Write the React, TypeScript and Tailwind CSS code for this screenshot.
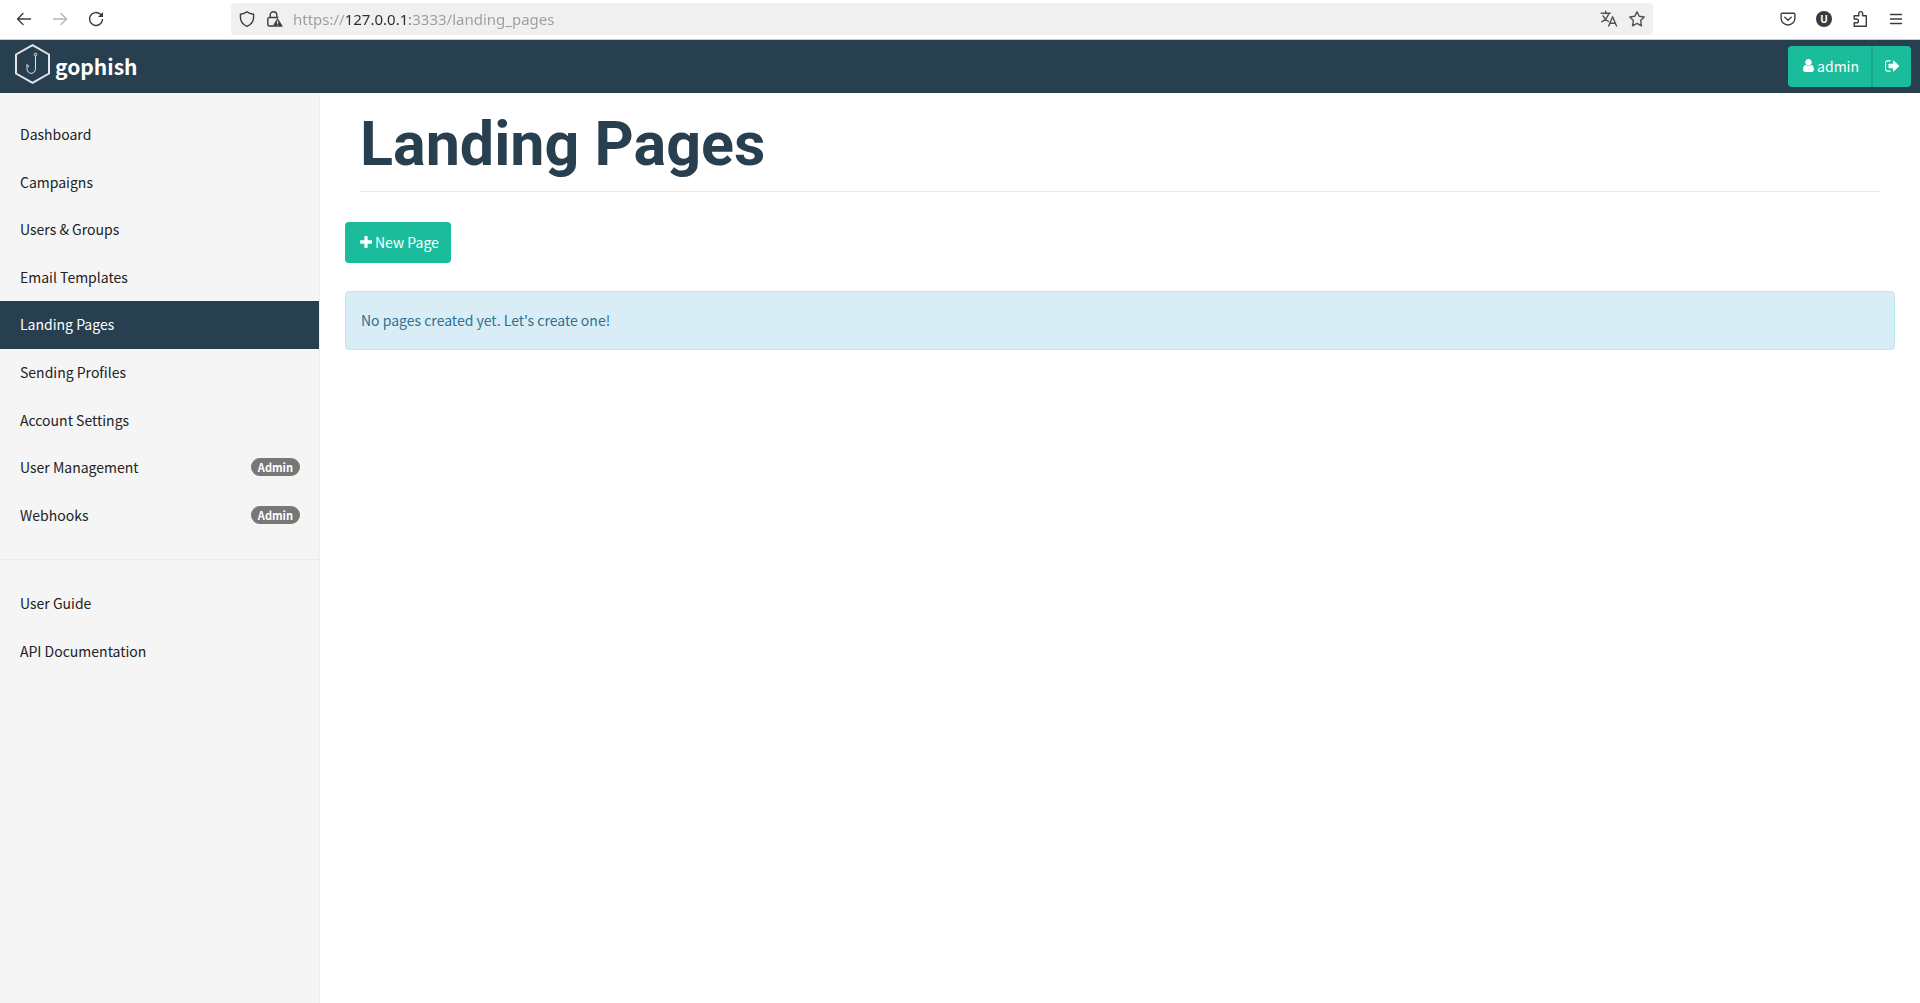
import type { ReactNode } from 'react';

const UI_FONT = "font-['Noto_Sans_CJK_SC',sans-serif]";

function PlusIcon() {
  return (
    <svg viewBox="192 128 1408 1408" className="size-3" fill="currentColor" aria-hidden="true">
      <path d="M1600 736v192q0 40-28 68t-68 28h-416v416q0 40-28 68t-68 28h-192q-40 0-68-28t-28-68v-416h-416q-40 0-68-28t-28-68v-192q0-40 28-68t68-28h416v-416q0-40 28-68t68-28h192q40 0 68 28t28 68v416h416q40 0 68 28t28 68z" />
    </svg>
  );
}

function UserIcon() {
  return (
    <svg viewBox="256 128 1280 1536" className="h-[13px] w-[11px]" fill="currentColor" aria-hidden="true">
      <path d="M1536 1399q0 109-62.5 187t-150.5 78h-854q-88 0-150.5-78t-62.5-187q0-85 8.5-160.5t31.5-152 58.5-131 94-89 134.5-34.5q131 128 313 128t313-128q76 0 134.5 34.5t94 89 58.5 131 31.5 152 8.5 160.5zm-256-887q0 159-112.5 271.5t-271.5 112.5-271.5-112.5-112.5-271.5 112.5-271.5 271.5-112.5 271.5 112.5 112.5 271.5z" />
    </svg>
  );
}

function SignOutIcon() {
  return (
    <svg viewBox="64 224 1568 1344" className="h-3 w-[14px]" fill="currentColor" aria-hidden="true">
      <path d="M704 1440q0 4 1 20t.5 26.5-3 23.5-10 19.5-20.5 6.5h-320q-119 0-203.5-84.5t-84.5-203.5v-704q0-119 84.5-203.5t203.5-84.5h320q13 0 22.5 9.5t9.5 22.5q0 4 1 20t.5 26.5-3 23.5-10 19.5-20.5 6.5h-320q-66 0-113 47t-47 113v704q0 66 47 113t113 47h312l11.5 1 11.5 3 8 5.5 7 9 2 13.5zm928-544q0 26-19 45l-544 544q-19 19-45 19t-45-19-19-45v-288h-448q-26 0-45-19t-19-45v-384q0-26 19-45t45-19h448v-288q0-26 19-45t45-19 45 19l544 544q19 19 19 45z" />
    </svg>
  );
}

function Logo() {
  return (
    <svg viewBox="0 0 36 40" className="mb-1 h-10 w-9 text-[#e4e6e8]" fill="none" stroke="currentColor" aria-hidden="true">
      <path d="M17.5 1.2 34 10.5V29.5L17.5 38.8 1 29.5V10.5z" strokeWidth="2" />
      <circle cx="20.500" cy="10.5" r="1.3" />
      <path d="M20.500 12V24.500C20.500 31 12 31 12 24.500V20.500L14 23" />
    </svg>
  );
}

function ToolIcon({ children, label, className = 'text-[#3c3c40]' }: { children: ReactNode; label: string; className?: string }) {
  return (
    <button type="button" aria-label={label} className={className}>
      <svg viewBox="0 0 16 16" className="size-4 overflow-visible" fill="none" stroke="currentColor" strokeWidth="1.4" strokeLinecap="round" strokeLinejoin="round">
        {children}
      </svg>
    </button>
  );
}

function BrowserBar() {
  return (
    <div className="flex h-10 items-center border-b border-[#cccccc] bg-white pb-px">
      <div className="flex w-[231px] items-center gap-5 pl-4">
        <ToolIcon label="Back"><path d="M14.500 8H1.500M7 2.500 1.500 8 7 13.500" /></ToolIcon>
        <ToolIcon label="Forward" className="text-[#b5b5b8]"><path d="M1.500 8h13M9 2.500 14.500 8 9 13.500" /></ToolIcon>
        <ToolIcon label="Reload">
          <path d="M14.500 8.500A6.500 6.500 0 1 1 12.500 3.300" />
          <path d="M15 1v5h-5z" fill="currentColor" stroke="none" />
        </ToolIcon>
      </div>
      <div className="flex h-8 flex-1 items-center rounded bg-[#f0f0f0] px-2">
        <ToolIcon label="Tracking protection">
          <path d="M8 .8C9.700 2.200 12 2.900 14.600 3.300v2.800C14.600 10.500 12.300 13.700 8 15.300 3.700 13.700 1.400 10.500 1.400 6.100V3.300C4 2.900 6.300 2.200 8 .8z" />
        </ToolIcon>
        <span className="w-3" />
        <ToolIcon label="Connection not secure">
          <path d="M3.200 6.500V4a3.300 3.300 0 0 1 6.600 0V6.500M5.500 15H2.300A1.500 1.500 0 0 1 .8 13.500V8A1.500 1.500 0 0 1 2.300 6.500H10.700" />
          <path d="M10.700 7.800 15.300 15.300H6.300z" fill="currentColor" strokeWidth=".8" />
          <path d="M10.700 10v2.500M10.700 14v.1" stroke="#f0f0f0" strokeWidth="1.100" />
        </ToolIcon>
        <input
          type="text"
          aria-label="Address"
          defaultValue="https://127.0.0.1:3333/landing_pages"
          className="ml-[10px] min-w-0 flex-1 bg-[linear-gradient(90deg,#9c9c9f_52px,#2b2b2f_52px,#2b2b2f_117px,#9c9c9f_117px)] bg-clip-text font-['Noto_Sans',sans-serif] text-[15px] leading-6 text-transparent caret-black outline-none"
        />
        <ToolIcon label="Translate page" className="mr-3 text-[#505054]">
          <path d="M.2 2.300h9M4.700.3V2.300M7.700 2.300C7 6 3.700 9 .8 10.800M2 4.800C3.500 7.500 5.300 9.200 7.500 10.500M7.700 15l3.900-9.200L15.500 15M9.200 12.300h5" />
        </ToolIcon>
        <ToolIcon label="Bookmark this page" className="text-[#505054]">
          <path d="M8 .8 10.200 5.300 15.200 6 11.600 9.500 12.500 14.800 8 12.400 3.500 14.800 4.400 9.500.8 6 5.800 5.300z" />
        </ToolIcon>
      </div>
      <div className="ml-[127px] flex items-center gap-5 pr-4">
        <ToolIcon label="Save to Pocket">
          <path d="M2.300 2.200h11.400a1.200 1.200 0 0 1 1.200 1.200V7.300a6.900 6.700 0 0 1-13.800 0V3.400A1.200 1.200 0 0 1 2.300 2.200zM4.800 6.300 8 9.300l3.200-3" />
        </ToolIcon>
        <button type="button" className="size-4 rounded-full bg-[#3a3a3c] text-center font-['Noto_Sans',sans-serif] text-[10px] leading-4 font-bold text-white">U</button>
        <ToolIcon label="Extensions">
          <path d="M2.200 15.200H14.300V4.800H10.600V2.500a1.900 1.900 0 0 0-3.800 0V4.800H2.200V8H4.500a1.900 1.900 0 0 1 0 3.800H2.200z" />
        </ToolIcon>
        <ToolIcon label="Open menu"><path d="M2.500 3.500h11M2.500 8h11M2.500 12.500h11" /></ToolIcon>
      </div>
    </div>
  );
}

const links = ['Dashboard', 'Campaigns', 'Users & Groups', 'Email Templates', 'Landing Pages', 'Sending Profiles', 'Account Settings', 'User Management', 'Webhooks'];

function NavItem({ label }: { label: string }) {
  const active = label === 'Landing Pages';
  const admin = label === 'User Management' || label === 'Webhooks';
  return (
    <li className="grid">
      <a href="#" className={`flex items-center justify-between pr-[19px] pb-px pl-5 leading-5 ${active ? 'bg-[#283f50] text-white' : 'text-[#222222]'}`}>
        {label}
        {admin && <span className="rounded-full bg-[#777777] px-[7px] text-[11px] leading-[18px] font-bold text-white">Admin</span>}
      </a>
    </li>
  );
}

export default function App() {
  return (
    <div className={`flex min-h-screen flex-col bg-white text-sm ${UI_FONT}`}>
      <BrowserBar />
      <header className="flex h-[53px] items-center justify-between bg-[#283f50] pr-[9px] pb-px pl-[15px] text-white">
        <a href="#" className="flex items-center gap-1">
          <Logo />
          <span className="text-[21px] leading-6 font-bold">gophish</span>
        </a>
        <div className="flex h-[41px] overflow-hidden rounded bg-[#1abc9c]">
          <button type="button" className="flex items-center gap-[3px] pr-3 pb-px pl-[15px]"><UserIcon />admin</button>
          <button type="button" aria-label="Sign out" className="border-l-2 border-[#1ca78c] px-3"><SignOutIcon /></button>
        </div>
      </header>
      <div className="flex flex-1">
        <nav className="w-80 border-r border-[#eeeeee] bg-[#f5f5f5] pt-[18px]">
          <ul className="grid h-[428px] grid-rows-9">{links.map((l) => <NavItem key={l} label={l} />)}</ul>
          <hr className="my-5 border-[#eaeaea]" />
          <ul className="grid h-[95px] grid-rows-2"><NavItem label="User Guide" /><NavItem label="API Documentation" /></ul>
        </nav>
        <main className="flex-1 px-[25px]">
          <div className="mx-[15px] border-b border-[#e7e9eb] pt-4 pb-3">
            <h1 className="font-['Roboto',sans-serif] text-[61px] leading-[70px] font-bold text-[#283f50]">Landing Pages</h1>
          </div>
          <button type="button" className="mt-[30px] flex h-[41px] items-center gap-[3px] rounded bg-[#1abc9c] pr-3 pb-px pl-[15px] text-white"><PlusIcon />New Page</button>
          <div className="mt-7 rounded border border-[#bce8f1] bg-[#d9edf7] px-[15px] pt-[18px] pb-[19px] leading-5 text-[#31708f]">No pages created yet. Let's create one!</div>
        </main>
      </div>
    </div>
  );
}
